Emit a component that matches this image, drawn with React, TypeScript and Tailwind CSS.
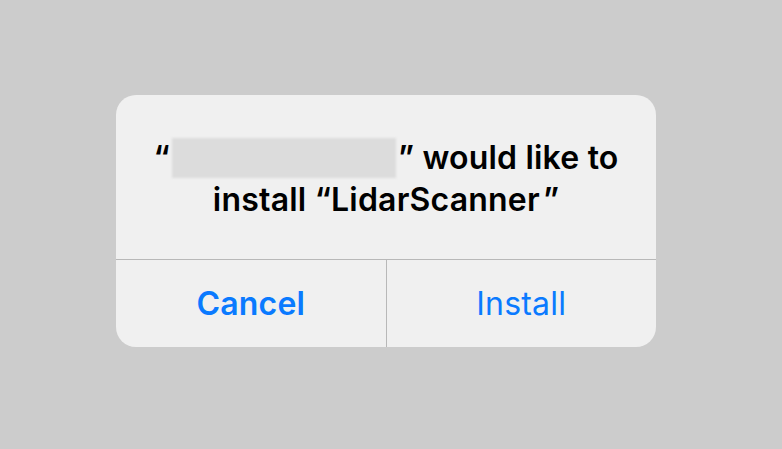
import React from "react";

export default function App() {
  return (
    <div
      className="w-[782px] h-[449px] bg-[#cccccc] pl-[116px] pt-[95px]"
      style={{ fontFamily: "Inter, 'Noto Sans', sans-serif" }}
    >
      <div className="w-[540px] h-[252px] rounded-[20px] bg-[#f0f0f0] flex flex-col overflow-hidden">
        <div className="h-[164px] flex flex-col items-center justify-center pt-[4px] text-black font-semibold text-[32px] leading-[42px] tracking-[0.2px]">
          <div className="flex items-center">
            <span>“</span>
            <span className="inline-block w-[224px] h-[40px] bg-[#dcdcdc] blur-[1px] mx-[2px]" />
            <span>” would like to</span>
          </div>
          <div>install “LidarScanner<span className="ml-[3px]">”</span></div>
        </div>
        <div className="h-px bg-[#b8b8b8]" />
        <div className="flex-1 flex tracking-[0.2px]">
          <div className="flex-1 flex items-center justify-center text-[#0a7aff] font-semibold text-[32px]">
            Cancel
          </div>
          <div className="w-px bg-[#b8b8b8]" />
          <div className="flex-1 flex items-center justify-center text-[#0a7aff] font-normal text-[32px]">
            Install
          </div>
        </div>
      </div>
    </div>
  );
}
